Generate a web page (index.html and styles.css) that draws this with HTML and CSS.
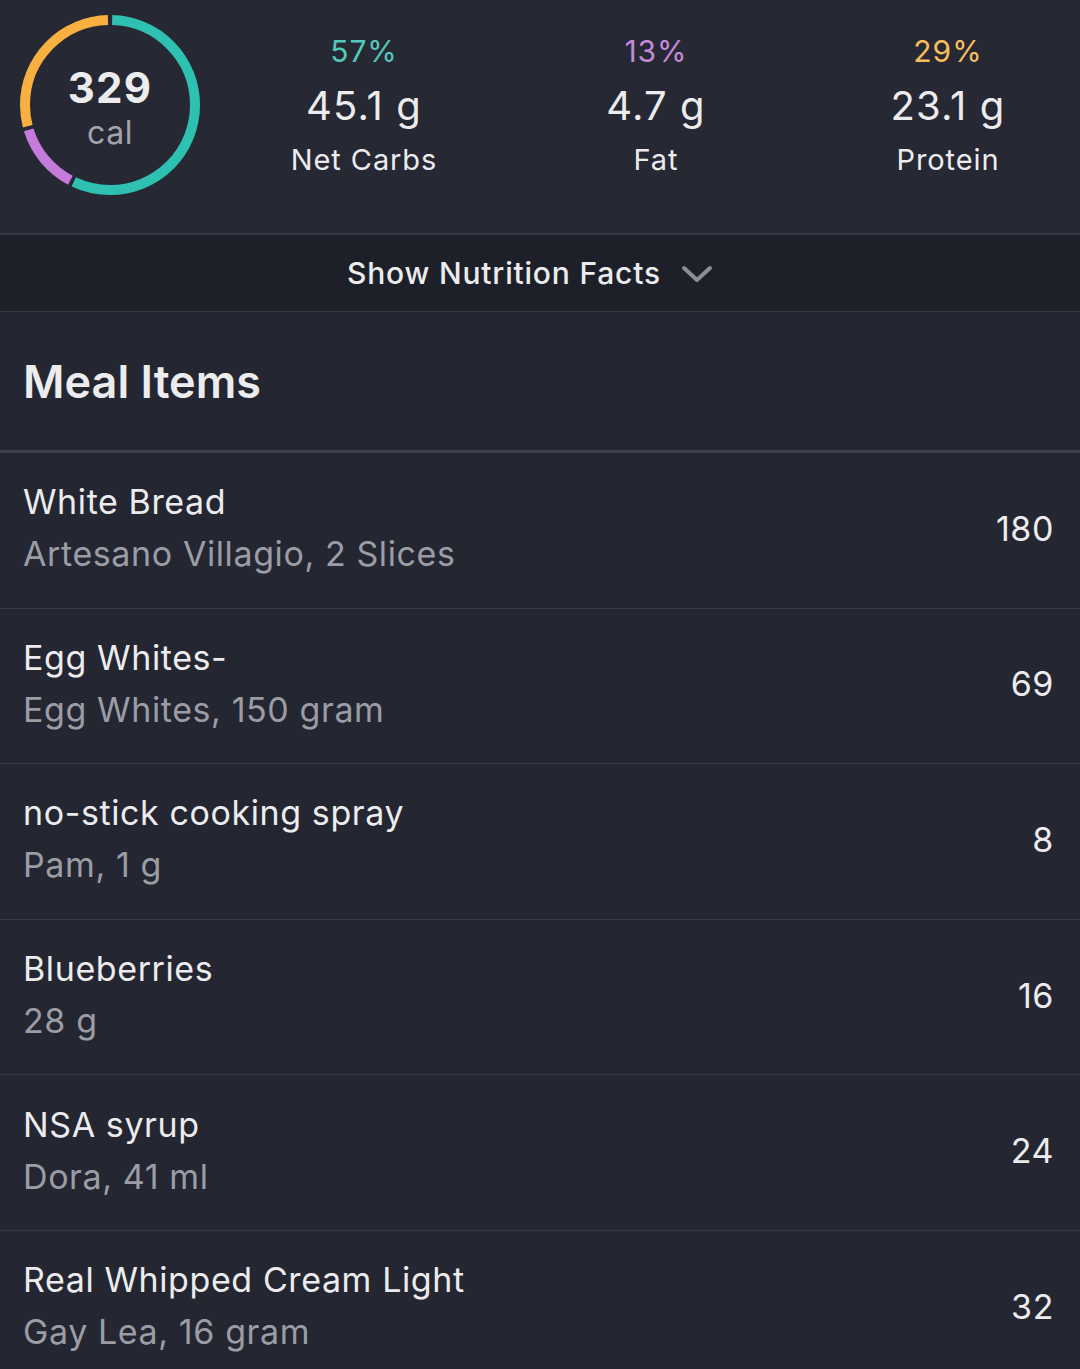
FILE: index.html
```html
<!DOCTYPE html>
<html lang="en">
<head>
  <meta charset="UTF-8">
  <title>Meal Summary</title>
  <link rel="stylesheet" href="styles.css">
</head>
<body>

  <header class="summary">
    <div class="ring-wrap">
      <svg class="ring" viewBox="0 0 180 180" width="180" height="180">
        <g transform="rotate(-90 90 90)">
          <circle class="seg seg-carbs" cx="90" cy="90" r="85" stroke-dasharray="301.9 534.07" stroke-dashoffset="-2.2"></circle>
          <circle class="seg seg-fat" cx="90" cy="90" r="85" stroke-dasharray="66.8 534.07" stroke-dashoffset="-307.8"></circle>
          <circle class="seg seg-protein" cx="90" cy="90" r="85" stroke-dasharray="152.8 534.07" stroke-dashoffset="-378.3"></circle>
        </g>
      </svg>
      <div class="ring-label">
        <span class="cal-num">329</span>
        <span class="cal-unit">cal</span>
      </div>
    </div>

    <div class="macro">
      <span class="pct pct-carbs">57%</span>
      <span class="amount">45.1 g</span>
      <span class="macro-name">Net Carbs</span>
    </div>
    <div class="macro">
      <span class="pct pct-fat">13%</span>
      <span class="amount">4.7 g</span>
      <span class="macro-name">Fat</span>
    </div>
    <div class="macro">
      <span class="pct pct-protein">29%</span>
      <span class="amount">23.1 g</span>
      <span class="macro-name">Protein</span>
    </div>
  </header>

  <div class="facts-toggle">
    <span>Show Nutrition Facts</span>
    <svg class="chevron" viewBox="0 0 32 18" width="32" height="18">
      <path d="M3 3 L16 15 L29 3" fill="none" stroke="#8b8d96" stroke-width="4" stroke-linecap="round" stroke-linejoin="round"/>
    </svg>
  </div>

  <h2 class="section-title">Meal Items</h2>

  <ul class="items">
    <li class="item">
      <div class="item-text">
        <span class="item-name">White Bread</span>
        <span class="item-detail">Artesano Villagio, 2 Slices</span>
      </div>
      <span class="item-cal">180</span>
    </li>
    <li class="item">
      <div class="item-text">
        <span class="item-name">Egg Whites-</span>
        <span class="item-detail">Egg Whites, 150 gram</span>
      </div>
      <span class="item-cal">69</span>
    </li>
    <li class="item">
      <div class="item-text">
        <span class="item-name">no-stick cooking spray</span>
        <span class="item-detail">Pam, 1 g</span>
      </div>
      <span class="item-cal">8</span>
    </li>
    <li class="item">
      <div class="item-text">
        <span class="item-name">Blueberries</span>
        <span class="item-detail">28 g</span>
      </div>
      <span class="item-cal">16</span>
    </li>
    <li class="item">
      <div class="item-text">
        <span class="item-name">NSA syrup</span>
        <span class="item-detail">Dora, 41 ml</span>
      </div>
      <span class="item-cal">24</span>
    </li>
    <li class="item">
      <div class="item-text">
        <span class="item-name">Real Whipped Cream Light</span>
        <span class="item-detail">Gay Lea, 16 gram</span>
      </div>
      <span class="item-cal">32</span>
    </li>
  </ul>

</body>
</html>
```

FILE: styles.css
```css
body {
  margin: 0;
  font-family: Inter, 'Noto Sans', sans-serif;
  background: #242631;
  color: #ececee;
  overflow: hidden;
}

.summary {
  display: grid;
  grid-template-columns: 218px repeat(3, 292px);
  height: 233px;
  background: #262833;
  border-bottom: 2px solid #363843;
}

.ring-wrap {
  position: relative;
  width: 180px;
  height: 180px;
  margin: 15px 0 0 20px;
}

.ring .seg {
  fill: none;
  stroke-width: 10;
}

.seg-carbs { stroke: #2ec1b1; }
.seg-fat { stroke: #c57bdc; }
.seg-protein { stroke: #f8b140; }

.ring-label {
  position: absolute;
  inset: 0;
  display: flex;
  flex-direction: column;
  align-items: center;
  padding-top: 50px;
}

.cal-num {
  font-size: 42px;
  font-weight: 700;
  line-height: 46px;
  letter-spacing: 1.2px;
  color: #ececee;
}

.cal-unit {
  font-size: 32px;
  line-height: 40px;
  margin-top: 2px;
  letter-spacing: 0.5px;
  color: #a3a5ad;
}

.macro {
  display: flex;
  flex-direction: column;
  align-items: center;
  padding-top: 31px;
}

.pct {
  font-size: 30px;
  line-height: 40px;
  letter-spacing: 1px;
}

.pct-carbs { color: #52cabb; }
.pct-fat { color: #c48ad9; }
.pct-protein { color: #f6bd5e; }

.amount {
  font-size: 40px;
  line-height: 56px;
  margin-top: 7px;
  letter-spacing: 1.1px;
}

.macro-name {
  font-size: 29px;
  line-height: 40px;
  margin-top: 6px;
  letter-spacing: 0.9px;
}

.facts-toggle {
  height: 76px;
  display: flex;
  align-items: center;
  justify-content: center;
  gap: 20px;
  padding-right: 20px;
  background: #1e2029;
  border-bottom: 1px solid #363843;
  font-size: 30px;
  font-weight: 500;
  letter-spacing: 0.8px;
}

.chevron {
  margin-top: 2px;
}

.section-title {
  margin: 0;
  height: 138px;
  display: flex;
  align-items: center;
  padding-left: 23px;
  font-size: 45px;
  font-weight: 600;
  border-bottom: 3px solid #3e404b;
}

.items {
  list-style: none;
  margin: 0;
  padding: 0;
}

.item {
  height: 155.6px;
  display: flex;
  align-items: center;
  justify-content: space-between;
  padding: 0 26px 4px 23px;
  box-sizing: border-box;
  border-bottom: 1px solid #363843;
  font-size: 34px;
  letter-spacing: 0.6px;
}

.item-text {
  display: flex;
  flex-direction: column;
}

.item-name {
  line-height: 52px;
}

.item-detail {
  line-height: 52px;
  color: #9b9da6;
}

.item-cal {
  color: #ececee;
}
```
